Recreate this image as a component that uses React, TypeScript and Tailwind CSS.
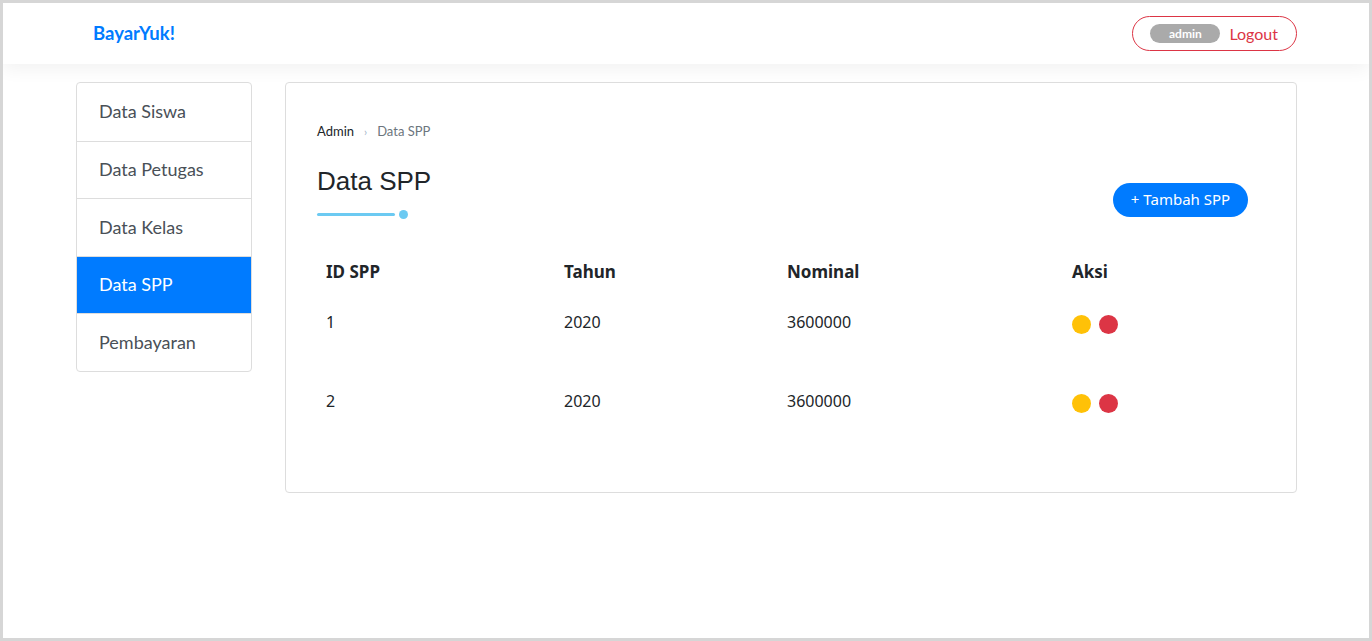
import React from "react";

const menu = ["Data Siswa", "Data Petugas", "Data Kelas", "Data SPP", "Pembayaran"];

const rows = [
  { id: "1", tahun: "2020", nominal: "3600000" },
  { id: "2", tahun: "2020", nominal: "3600000" },
];

const lato = "font-['Lato','Noto_Sans',sans-serif]";
const body = "font-['Noto_Sans','Open_Sans',sans-serif]";

const App = () => {
  return (
    <div className="h-[641px] w-[1372px] border-[3px] border-[#d6d6d6] bg-white overflow-hidden">
      <nav className="relative z-10 flex h-[61px] items-center justify-between bg-white pl-[90px] pr-[72px] shadow-[0_6px_16px_rgba(0,0,0,0.05)]">
        <a className={`${lato} text-[18.5px] font-bold text-[#007bff]`}>BayarYuk!</a>
        <button className="flex h-[35px] items-center gap-[9px] rounded-full border border-[#dc3545] pl-[17px] pr-[18px]">
          <span className={`${lato} flex h-[19px] w-[70px] items-center justify-center rounded-full bg-[#aaaaaa] text-[12px] font-bold text-white`}>
            admin
          </span>
          <span className={`${lato} text-[16px] text-[#dc3545]`}>Logout</span>
        </button>
      </nav>

      <div className="flex items-start gap-[33px] pl-[73px] pt-[18px]">
        <ul className="w-[176px] overflow-hidden rounded-[4px] border border-[#dddddd]">
          {menu.map((m, i) => (
            <li
              key={m}
              className={`${lato} flex h-[57.5px] items-center pl-[22px] text-[18px] ${
                i > 0 ? "border-t border-[#dddddd]" : ""
              } ${m === "Data SPP" ? "bg-[#007bff] text-white" : "text-[#495057]"}`}
            >
              {m}
            </li>
          ))}
        </ul>

        <main className="h-[411px] w-[1012px] rounded-[4px] border border-[#dddddd] px-[31px] pt-[39px]">
          <div className={`${lato} flex items-center gap-[10px] text-[13px]`}>
            <span className="text-[#212529]">Admin</span>
            <span className="text-[11px] text-[#9fb5c8]">›</span>
            <span className="text-[#6c757d]">Data SPP</span>
          </div>

          <div className="mt-[22px] flex items-start justify-between pr-[17px]">
            <div>
              <h1 className="font-['Liberation_Sans',Arial,sans-serif] text-[26px] leading-[34px] text-[#212529]">
                Data SPP
              </h1>
              <div className="mt-[12px] flex items-center gap-[4px]">
                <div className="h-[3px] w-[78px] rounded-full bg-[#6ccaf2]" />
                <div className="h-[9px] w-[9px] rounded-full bg-[#6ccaf2]" />
              </div>
            </div>
            <button
              className={`${body} mt-[19px] h-[34px] w-[135px] rounded-full bg-[#007bff] text-[15px] text-white`}
            >
              + Tambah SPP
            </button>
          </div>

          <div className={`${body} mt-[30px] text-[#212529]`}>
            <div className="grid h-[46px] grid-cols-[238px_223px_285px_1fr] items-center text-[17px] font-bold">
              <div className="pl-[9px]">ID SPP</div>
              <div className="pl-[9px]">Tahun</div>
              <div className="pl-[9px]">Nominal</div>
              <div className="pl-[9px]">Aksi</div>
            </div>
            {rows.map((r) => (
              <div
                key={r.id}
                className="grid h-[79px] grid-cols-[238px_223px_285px_1fr] items-start pt-[15px] text-[16px]"
              >
                <div className="pl-[9px]">{r.id}</div>
                <div className="pl-[9px]">{r.tahun}</div>
                <div className="pl-[9px]">{r.nominal}</div>
                <div className="flex gap-[8px] pl-[9px] pt-[5px]">
                  <button className="h-[19px] w-[19px] rounded-full bg-[#ffc107]" />
                  <button className="h-[19px] w-[19px] rounded-full bg-[#dc3545]" />
                </div>
              </div>
            ))}
          </div>
        </main>
      </div>
    </div>
  );
};

export default App;
